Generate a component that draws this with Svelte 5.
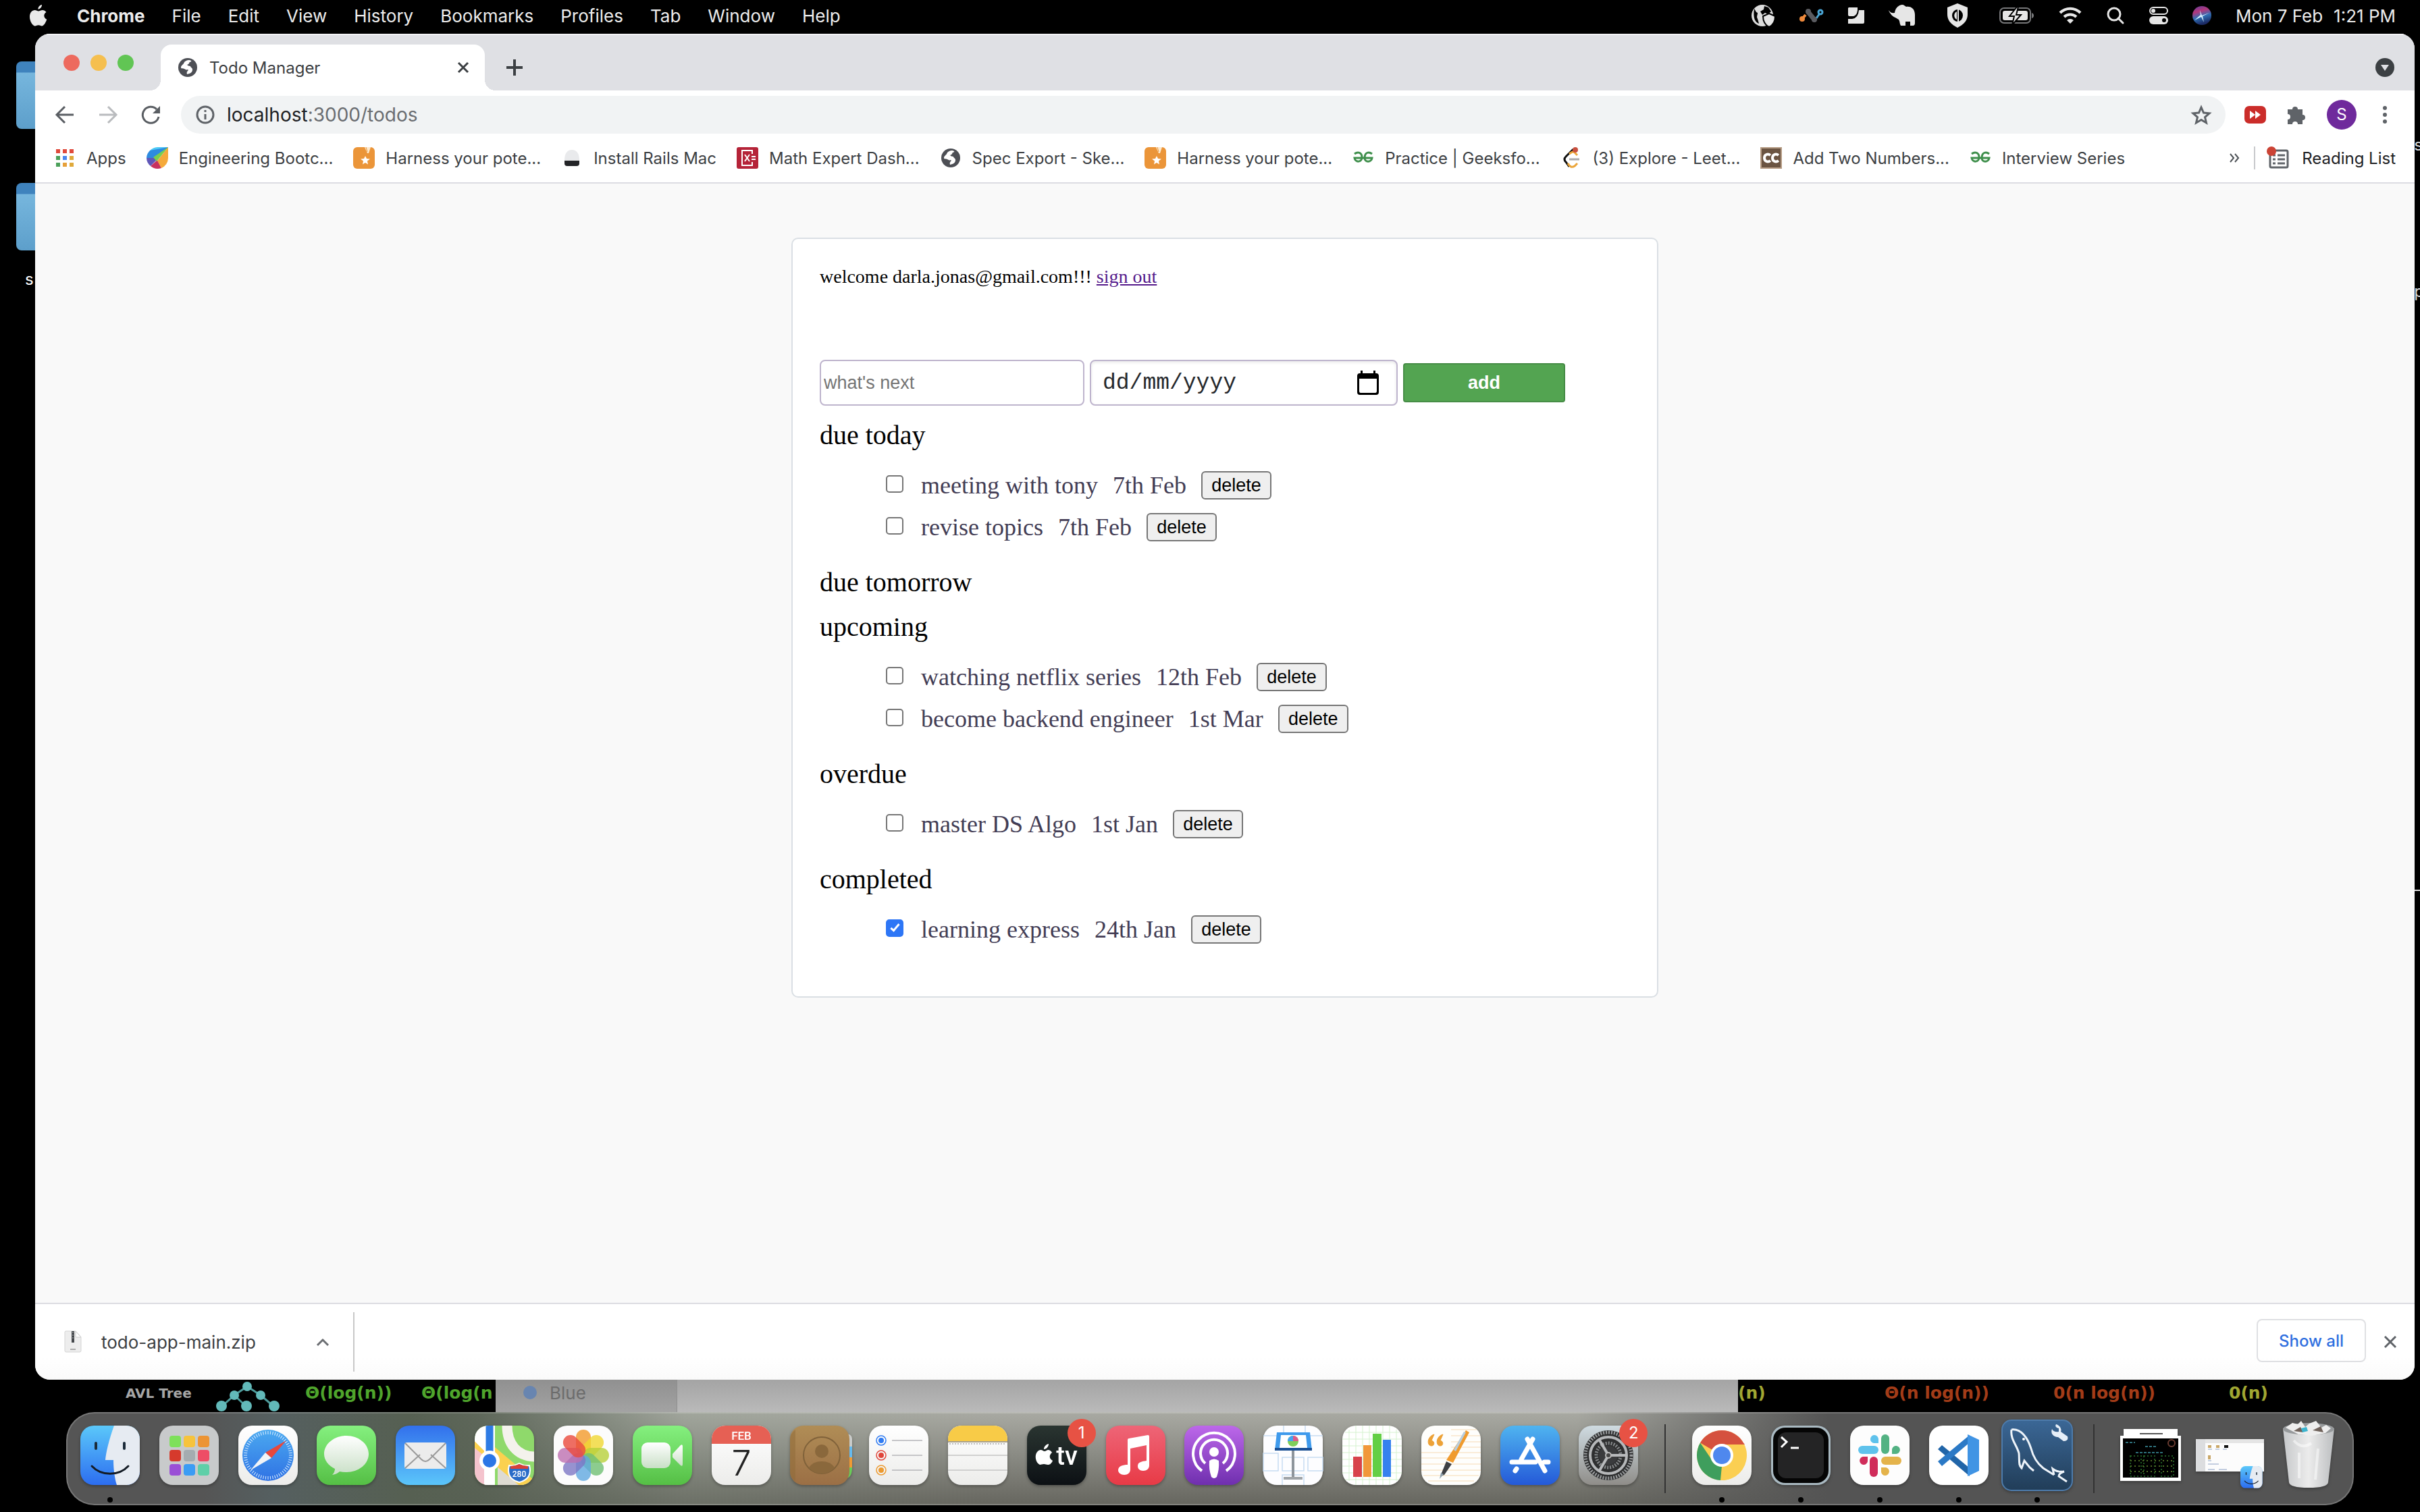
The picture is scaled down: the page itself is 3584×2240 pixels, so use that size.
<script>
  const menus = ['File', 'Edit', 'View', 'History', 'Bookmarks', 'Profiles', 'Tab', 'Window', 'Help'];

  const bookmarks = [
    { icon: 'apps', label: 'Apps' },
    { icon: 'wheel', label: 'Engineering Bootc...' },
    { icon: 'medal', label: 'Harness your pote...' },
    { icon: 'helmet', label: 'Install Rails Mac' },
    { icon: 'math', label: 'Math Expert Dash...' },
    { icon: 'globe', label: 'Spec Export - Ske...' },
    { icon: 'medal', label: 'Harness your pote...' },
    { icon: 'geeks', label: 'Practice | Geeksfo...' },
    { icon: 'leet', label: '(3) Explore - Leet...' },
    { icon: 'cc', label: 'Add Two Numbers...' },
    { icon: 'geeks', label: 'Interview Series' }
  ];

  let sections = $state([
    {
      title: 'due today',
      todos: [
        { id: 1, text: 'meeting with tony', date: '7th Feb', done: false },
        { id: 2, text: 'revise topics', date: '7th Feb', done: false }
      ]
    },
    { title: 'due tomorrow', todos: [] },
    {
      title: 'upcoming',
      todos: [
        { id: 3, text: 'watching netflix series', date: '12th Feb', done: false },
        { id: 4, text: 'become backend engineer', date: '1st Mar', done: false }
      ]
    },
    { title: 'overdue', todos: [{ id: 5, text: 'master DS Algo', date: '1st Jan', done: false }] },
    { title: 'completed', todos: [{ id: 6, text: 'learning express', date: '24th Jan', done: true }] }
  ]);

  const petals = ['#f39a2b', '#f0d732', '#b6cf3a', '#6fbf73', '#5fa8e0', '#7d77c4', '#bd6fb0', '#ea4a3c'];
  const ticks = Array.from({ length: 60 }, (_, i) => i * 6);
  const pads = ['#7ee05a', '#f6c33c', '#ec9434', '#d63a2c', '#a4acb0', '#ee4d66', '#9a4fd6', '#3b9cf4', '#5fcfa8'];
</script>

{#snippet globe()}
  <svg viewBox="0 0 28 28" aria-hidden="true">
    <circle cx="14" cy="14" r="14" fill="#4d4f55" />
    <path d="M17 3c-5 0-8 2-9 5-1 2-4 3-4 6 0 2 3 1 5 2s3 2 5 1l1 1c-2 2-3 3-2 6 5-1 8-3 8-7 0-3-3-3-3-5-2 0-4-1-5-2l2-1c2-1 1-3 2-3 3-1 3-2 0-3z" fill="#fff" />
  </svg>
{/snippet}

{#snippet face()}
  <rect width="88" height="88" rx="20" fill="url(#finderBlue)" />
  <path d="M50 0C42 22 38 40 37 51h12c0 14 2 28 5 37h14a20 20 0 0 0 20-20V20A20 20 0 0 0 68 0z" fill="#e6ebf2" />
  <path d="M23 26v8M65 26v8" stroke="#1b2b3a" stroke-width="4" stroke-linecap="round" />
  <path d="M17 60c14 15 40 15 54 0" fill="none" stroke="#141c26" stroke-width="3" stroke-linecap="round" />
{/snippet}

{#snippet chrome()}
  <circle cx="44" cy="44" r="37" fill="#fbcf52" />
  <path d="M44 44 12 25.500A37 37 0 0 1 76 25.500L78 28H44z" fill="#d5513e" />
  <path d="M12 25.500 30 52 44 60 42 81A37 37 0 0 1 12 25.500z" fill="#3f9e5d" />
  <path d="M58 52 42 81A37 37 0 0 0 77 28H44z" fill="#fbcf52" />
  <circle cx="44" cy="44" r="17" fill="#fff" />
  <circle cx="44" cy="44" r="13" fill="#4f88ee" />
{/snippet}

{#snippet favicon(name)}
  {#if name === 'globe'}
    {@render globe()}
  {:else}
    <svg viewBox="0 0 32 32" aria-hidden="true">
      {#if name === 'apps'}
        <path d="M3 3h6v6H3zM13 3h6v6h-6zM23 3h6v6h-6z" fill="#e04a3c" />
        <path d="M3 13h6v6H3zM3 23h6v6H3z" fill="#4ba05a" />
        <path d="M13 13h6v6h-6z" fill="#4a87ee" />
        <path d="M13 23h6v6h-6z" fill="#e6a03a" />
        <path d="M23 13h6v6h-6zM23 23h6v6h-6z" fill="#dfa93a" />
      {:else if name === 'wheel'}
        <path d="M32 0H16A16 16 0 0 0 5 5l10 15z" fill="#4cc9f5" />
        <path d="M32 0 5 5A16 16 0 0 0 0 16l14 4z" fill="#2e8be0" />
        <path d="M0 16a16 16 0 0 0 6 12l12-12z" fill="#6057b8" />
        <path d="M6 28a16 16 0 0 0 16 3l-6-12z" fill="#c8325f" />
        <path d="M32 0v16a16 16 0 0 1-10 15l-6-11z" fill="#f5a93a" />
        <path d="M32 0 15 21l-5-6z" fill="#79cf4f" />
      {:else if name === 'medal'}
        <rect width="32" height="32" rx="6" fill="#eb9539" />
        <path d="M17 0h9l-3 9h-2z" fill="#fde9cd" />
        <path d="m19 0 2 7" stroke="#eb9539" />
        <path d="m18 13 2 4 5 .5-4 3 1 5-4-2.500-4 2.500 1-5-4-3 5-.5z" fill="#fff" />
      {:else if name === 'helmet'}
        <path d="M5 20C5 9 9 4 16 4s11 5 11 16z" fill="#e9eaec" />
        <path d="M5 20h22v4a4 4 0 0 1-4 4H9a4 4 0 0 1-4-4z" fill="#232427" />
      {:else if name === 'math'}
        <rect width="32" height="32" rx="3" fill="#b52338" />
        <path d="M23 10V5H8v22h15v-5" fill="none" stroke="#fff" stroke-width="2" />
        <path d="m12 11 7 10m0-10-7 10M22 14h6m-6 4h6" stroke="#fff" stroke-width="2" />
      {:else if name === 'geeks'}
        <path d="M3 10c5-4 11-2 11 5 0 8-10 8-11 1h26c-1 7-11 7-11 0 0-8 6-10 11-6" fill="none" stroke="#3f8f4c" stroke-width="3" />
      {:else if name === 'leet'}
        <path d="M19 3 8 14q-4 4 0 8l5 7" fill="none" stroke="#111" stroke-width="3" />
        <path d="m13 10 3-2q3-2 5 0l4 4M11 24q4 8 10 4l4-4" fill="none" stroke="#eba53a" stroke-width="3" />
        <path d="M13 18h15" stroke="#aaa" stroke-width="3" />
        <circle cx="22" cy="4" r="4" fill="#c8503f" />
      {:else if name === 'cc'}
        <rect width="32" height="32" fill="#b59b84" />
        <rect x="2" y="2" width="28" height="28" fill="#6b5442" />
        <path d="M15 12c-4-3-9-1-9 4s5 7 9 4M27 12c-4-3-9-1-9 4s5 7 9 4" fill="none" stroke="#fff" stroke-width="4" />
      {/if}
    </svg>
  {/if}
{/snippet}

<svg class="defs" aria-hidden="true">
  <defs>
    <linearGradient id="finderBlue" x2="0" y2="1"><stop stop-color="#5bc8fa" /><stop offset="1" stop-color="#2c6df0" /></linearGradient>
    <linearGradient id="green" x2="0" y2="1"><stop stop-color="#85f07f" /><stop offset="1" stop-color="#55bf45" /></linearGradient>
    <linearGradient id="mailBlue" x2="0" y2="1"><stop stop-color="#3270ec" /><stop offset="1" stop-color="#5bc6fa" /></linearGradient>
    <linearGradient id="storeBlue" x2="0" y2="1"><stop stop-color="#4fb4f0" /><stop offset="1" stop-color="#2459d8" /></linearGradient>
    <linearGradient id="compass" x2="0" y2="1"><stop stop-color="#4ba9f0" /><stop offset="1" stop-color="#2f72e4" /></linearGradient>
    <linearGradient id="silver" x2="0" y2="1"><stop stop-color="#fff" /><stop offset="1" stop-color="#c9dfc6" /></linearGradient>
    <linearGradient id="paper" x2="0" y2="1"><stop stop-color="#fff" /><stop offset="1" stop-color="#ececea" /></linearGradient>
    <linearGradient id="brown" x2="0" y2="1"><stop stop-color="#b08d56" /><stop offset="1" stop-color="#9b6f45" /></linearGradient>
    <linearGradient id="musicRed" x2="0" y2="1"><stop stop-color="#ee6577" /><stop offset="1" stop-color="#e83a46" /></linearGradient>
    <linearGradient id="purple" x2="0" y2="1"><stop stop-color="#bd68ea" /><stop offset="1" stop-color="#6f2fae" /></linearGradient>
    <linearGradient id="tvDark" x2="0" y2="1"><stop stop-color="#2a3531" /><stop offset="1" stop-color="#0c1014" /></linearGradient>
    <linearGradient id="steel" x2="0" y2="1"><stop stop-color="#cfdbe1" /><stop offset="1" stop-color="#8f8d89" /></linearGradient>
    <linearGradient id="navy" x2="0" y2="1"><stop stop-color="#3b6796" /><stop offset="1" stop-color="#213d58" /></linearGradient>
    <linearGradient id="folder" x2="0" y2="1"><stop stop-color="#3f83bd" /><stop offset="0.160" stop-color="#3f83bd" /><stop offset="0.170" stop-color="#76b6dd" /><stop offset="1" stop-color="#5d9fcb" /></linearGradient>
    <linearGradient id="bin" x2="1"><stop stop-color="#c6c8ca" /><stop offset="0.500" stop-color="#ececec" /><stop offset="1" stop-color="#bcbec0" /></linearGradient>
    <linearGradient id="siri" x2="0.300" y2="1"><stop stop-color="#5a3f9c" /><stop offset="0.350" stop-color="#b4377c" /><stop offset="0.650" stop-color="#2f6fb4" /><stop offset="1" stop-color="#1c2b66" /></linearGradient>
    <clipPath id="tile"><rect width="88" height="88" rx="20" /></clipPath>
  </defs>
</svg>

<div class="desktop">
  <div class="folders" aria-hidden="true">
    <svg viewBox="0 0 110 100"><rect width="110" height="100" rx="8" fill="url(#folder)" /></svg>
    <svg viewBox="0 0 110 100"><rect width="110" height="100" rx="8" fill="url(#folder)" /></svg>
    <span>s</span>
  </div>
  <div class="edge" aria-hidden="true"><span>s</span><span>p</span><i></i></div>

  <header class="menubar">
    <svg class="apple" viewBox="0 0 26 32" aria-label="Apple"><path d="M18 0c.3 3-2.500 6.500-5.500 6.700C12.200 3.500 15 .5 18 0zM24.500 11c-5 3.200-3.500 9 .8 10.700C23.500 27 20.500 31.500 18 31.500c-2 0-2.600-1.200-5-1.200s-3.200 1.200-5 1.200C4.500 31.500 0 24.500 0 18 0 11.500 3.700 8 7.500 8c2.200 0 4 1.500 5.500 1.500S16.500 8 19 8c2 0 4.200 1 5.500 3z" fill="#e9e9e9" /></svg>
    <nav>
      <button class="strong">Chrome</button>
      {#each menus as menu}<button>{menu}</button>{/each}
    </nav>
    <div class="status">
      <svg width="36" height="34" viewBox="0 0 36 34" aria-hidden="true">
        <circle cx="17" cy="17" r="16" fill="#dcdcdc" />
        <path d="M5 7c2 2 2 5 5 6 0 4-2 5 0 9l2 7C6 27 3 20 5 7zM20 3l6 2 4 6-5 4-4-2-4 3-3-5 5-3z" fill="#000" />
        <path d="m27 14 9 4c0 8-3 13-9 16-6-3-9-8-9-16z" fill="#e6e6e6" stroke="#000" stroke-width="2" />
      </svg>
      <svg width="36" height="20" viewBox="0 0 36 20" aria-hidden="true">
        <path d="M13 5 22 16" stroke="#5a5b60" stroke-width="7" stroke-linecap="round" />
        <path d="m4 15 5-6" stroke="#ef8a3c" stroke-width="4" /><circle cx="4" cy="15" r="4" fill="#ef8a3c" />
        <path d="m25 14 5-7" stroke="#4aa6d6" stroke-width="3" /><circle cx="31" cy="5" r="3" fill="none" stroke="#4aa6d6" stroke-width="3" />
        <circle cx="13" cy="4" r="4" fill="#5a5b60" /><circle cx="22" cy="16" r="4" fill="#5a5b60" />
      </svg>
      <svg width="24" height="24" viewBox="0 0 24 24" aria-hidden="true"><path d="M1 0h13v4q-1 8-6 9H2q-2 0-2-2V1zM24 4v18q0 2-2 2H0v-7h6q9-1 10-13z" fill="#e6e6e6" /></svg>
      <svg width="40" height="32" viewBox="0 0 40 32" aria-hidden="true"><path d="M0 8c3 4 5 5 9 4C10 6 13 1 20 0c3 0 4 2 6 3 8-1 13 4 13 12v12q0 4-3 4h-4v-6h-7v6h-7c-2-3-1-6-3-9l-5-3C7 18 2 14 0 8z" fill="#e6e6e6" /></svg>
      <svg width="52" height="36" viewBox="0 0 52 36" aria-hidden="true"><path d="m26 0 15 6v10c0 9-5 15-15 20-10-5-15-11-15-20V6z" fill="#e6e6e6" /><ellipse cx="26" cy="18" rx="8" ry="9" fill="#000" /><path d="M25 12v12c-5-2-5-10 0-12z" fill="#e6e6e6" /><path d="M27 8v20" stroke="#e6e6e6" stroke-width="2" /></svg>
      <svg width="52" height="26" viewBox="0 0 52 26" aria-hidden="true"><rect x="1" y="2" width="45" height="22" rx="6" fill="none" stroke="#77787a" stroke-width="2" /><rect x="5" y="6" width="37" height="14" rx="3" fill="#e6e6e6" /><path d="M48 9q3 1 3 4t-3 4z" fill="#77787a" /><path d="M27-1 15 14h7l-3 13 13-15h-7l3-12z" fill="#e6e6e6" stroke="#000" stroke-width="2" /></svg>
      <svg width="34" height="26" viewBox="0 0 34 26" aria-hidden="true"><path d="M2 9a21 21 0 0 1 30 0M8 15a13 13 0 0 1 18 0" fill="none" stroke="#e6e6e6" stroke-width="4" /><path d="M12 20a7 7 0 0 1 10 0l-5 5z" fill="#e6e6e6" /></svg>
      <svg width="28" height="26" viewBox="0 0 28 26" aria-hidden="true"><circle cx="12" cy="11" r="9" fill="none" stroke="#e6e6e6" stroke-width="3" /><path d="m18 17 7 7" stroke="#e6e6e6" stroke-width="3" stroke-linecap="round" /></svg>
      <svg width="28" height="26" viewBox="0 0 28 26" aria-hidden="true"><rect x="1" y="1" width="26" height="10" rx="5" fill="none" stroke="#e6e6e6" stroke-width="2" /><circle cx="6" cy="6" r="3" fill="#e6e6e6" /><rect y="14" width="28" height="12" rx="6" fill="#e6e6e6" /><circle cx="22" cy="20" r="3" fill="#000" /></svg>
      <svg width="28" height="28" viewBox="0 0 28 28" aria-hidden="true"><circle cx="14" cy="14" r="14" fill="url(#siri)" /><path d="m11 6 3 8 11-4-10 5 2 9-4-8-10 5 9-8z" fill="#d8f0ff" /></svg>
      <time><span>Mon 7 Feb</span><span>1:21 PM</span></time>
    </div>
  </header>

  <main class="window">
    <div class="tabstrip">
      <div class="lights"><button class="red" aria-label="Close"></button><button class="amber" aria-label="Minimise"></button><button class="lime" aria-label="Zoom"></button></div>
      <div class="tab">
        <span class="tabicon">{@render globe()}</span>
        <span class="title">Todo Manager</span>
        <button aria-label="Close tab"><svg width="18" height="18" viewBox="0 0 18 18"><path d="m2 2 14 14M16 2 2 16" stroke="#3c4043" stroke-width="3" /></svg></button>
      </div>
      <button class="newtab" aria-label="New tab"><svg width="24" height="24" viewBox="0 0 24 24"><path d="M12 0v24M0 12h24" stroke="#3c4043" stroke-width="4" /></svg></button>
      <button class="tabsearch" aria-label="Search tabs"><svg width="28" height="28" viewBox="0 0 28 28"><circle cx="14" cy="14" r="14" fill="#3c4043" /><path d="M8 10h12l-6 9z" fill="#dfe0e4" /></svg></button>
    </div>

    <div class="toolbar">
      <div class="history">
        <button aria-label="Back"><svg width="28" height="28" viewBox="0 0 28 28"><path d="M27 14H3M14 2 2 14l12 12" fill="none" stroke="#5a5e63" stroke-width="3" /></svg></button>
        <button aria-label="Forward"><svg width="28" height="28" viewBox="0 0 28 28"><path d="M1 14h24M14 2l12 12-12 12" fill="none" stroke="#b9bbbe" stroke-width="3" /></svg></button>
        <button aria-label="Reload"><svg width="28" height="28" viewBox="0 0 28 28"><path d="M25 17A12 12 0 1 1 22 6" fill="none" stroke="#5a5e63" stroke-width="3" /><path d="M27 1v11H16z" fill="#5a5e63" /></svg></button>
      </div>
      <div class="address">
        <svg width="28" height="28" viewBox="0 0 28 28" aria-hidden="true"><circle cx="14" cy="14" r="12" fill="none" stroke="#5f6368" stroke-width="3" /><path d="M14 7v3M14 13v8" stroke="#5f6368" stroke-width="3" /></svg>
        <p>localhost<span>:3000/todos</span></p>
        <button aria-label="Bookmark this page"><svg width="30" height="28" viewBox="0 0 30 28"><path d="m15 3 3.500 8 8.500.8-6.500 5.700 2 8.500-7.500-4.500L7.500 26l2-8.500L3 11.800l8.500-.8z" fill="none" stroke="#5f6368" stroke-width="3" /></svg></button>
      </div>
      <div class="tools">
        <svg width="32" height="26" viewBox="0 0 32 26" aria-hidden="true"><rect width="32" height="26" rx="7" fill="#cb2d2a" /><path d="m8 7 8 6-8 6zM16 7l8 6-8 6z" fill="#fff" /></svg>
        <svg width="30" height="30" viewBox="0 0 30 30" aria-hidden="true"><path d="M2 7h7a4 4 0 1 1 8 0h7v8a4 4 0 1 1 0 8v6h-7a4 4 0 0 0-8 0H2v-7a4 4 0 0 0 0-8z" fill="#5f6368" /></svg>
        <span class="avatar">S</span>
        <button aria-label="Menu"><svg width="8" height="28" viewBox="0 0 8 28"><circle cx="4" cy="4" r="3" fill="#5f6368" /><circle cx="4" cy="14" r="3" fill="#5f6368" /><circle cx="4" cy="24" r="3" fill="#5f6368" /></svg></button>
      </div>
    </div>

    <nav class="bookmarks">
      {#each bookmarks as mark}
        <a href="#{mark.icon}"><span class="favicon {mark.icon}">{@render favicon(mark.icon)}</span>{mark.label}</a>
      {/each}
      <button class="more" aria-label="More bookmarks"><svg width="14" height="14" viewBox="0 0 14 14"><path d="m1 1 5 6-5 6M8 1l5 6-5 6" fill="none" stroke="#4d5156" stroke-width="2" /></svg></button>
      <a class="reading" href="#reading"><svg width="34" height="34" viewBox="0 0 34 34" aria-hidden="true"><rect x="5" y="6" width="26" height="25" rx="2" fill="none" stroke="#5f6368" stroke-width="3" /><path d="M9 13h4m3 0h11M9 19h4m3 0h11M9 25h4m3 0h11" stroke="#5f6368" stroke-width="3" /><circle cx="7" cy="7" r="7" fill="#cb4335" /></svg>Reading List</a>
    </nav>

    <div class="page">
      <section class="card">
        <p class="welcome">welcome darla.jonas@gmail.com!!! <a href="#signout">sign out</a></p>
        <form onsubmit={(event) => event.preventDefault()}>
          <input class="next" type="text" placeholder="what's next" aria-label="what's next" />
          <div class="date">
            <input type="text" placeholder="dd/mm/yyyy" aria-label="Due date" />
            <button type="button" aria-label="Open calendar"><svg width="32" height="36" viewBox="0 0 32 36"><path d="M5 0h3v4h16V0h3v4h1q4 0 4 4v24q0 4-4 4H4q-4 0-4-4V8q0-4 4-4h1zM3 12v18q0 3 2 3h22q2 0 2-3V12z" fill="#000" /></svg></button>
          </div>
          <button class="add">add</button>
        </form>
        {#each sections as section}
          <h2>{section.title}</h2>
          {#if section.todos.length}
            <ul>
              {#each section.todos as todo (todo.id)}
                <li>
                  <input type="checkbox" id="todo-{todo.id}" bind:checked={todo.done} />
                  <label for="todo-{todo.id}">{todo.text}</label>
                  <span>{todo.date}</span>
                  <button onclick={() => (section.todos = section.todos.filter((t) => t.id !== todo.id))}>delete</button>
                </li>
              {/each}
            </ul>
          {/if}
        {/each}
      </section>
    </div>

    <footer class="downloads">
      <div class="file">
        <svg width="26" height="32" viewBox="0 0 26 32" aria-hidden="true"><path d="M2 0h15l8 9v20q0 2-2 2H3q-2 0-2-2V1z" fill="#ededed" stroke="#d5d5d5" /><path d="M17 0v9h8z" fill="#fff" stroke="#ccc" /><path d="M13 0v17" stroke="#45484c" stroke-width="4" /><path d="M13 1v12" stroke="#b9bbbd" stroke-width="1" stroke-dasharray="2 2" /><path d="M9 27h8" stroke="#aaa" stroke-width="2" /></svg>
        <span>todo-app-main.zip</span>
        <button aria-label="Download options"><svg width="20" height="12" viewBox="0 0 20 12"><path d="m2 11 8-8 8 8" fill="none" stroke="#6b6e72" stroke-width="3" /></svg></button>
      </div>
      <button class="showall">Show all</button>
      <button aria-label="Close downloads"><svg width="20" height="20" viewBox="0 0 20 20"><path d="m2 2 16 16M18 2 2 18" stroke="#5f6368" stroke-width="3" /></svg></button>
    </footer>
  </main>

  <div class="behind">
    <div class="left">
      <span class="tree">AVL Tree</span>
      <svg width="98" height="44" viewBox="0 0 98 44" aria-hidden="true"><path d="M10 38 29 21 48 8l20 13 20 17M29 21l18 17" fill="none" stroke="#4c9a9a" stroke-width="3" /><g fill="#62b9b9"><circle cx="48" cy="8" r="7" /><circle cx="29" cy="21" r="7" /><circle cx="68" cy="21" r="7" /><circle cx="10" cy="37" r="8" /><circle cx="47" cy="37" r="8" /><circle cx="88" cy="37" r="8" /></g></svg>
      <span>Θ(log(n))</span><span>Θ(log(n</span>
    </div>
    <div class="tag"><i></i>Blue</div>
    <div class="panel"></div>
    <div class="right"><span>(n)</span><span class="hot">Θ(n log(n))</span><span class="hot">0(n log(n))</span><span>0(n)</span></div>
  </div>

  <nav class="dock" aria-label="Dock">
    <button class="app running" aria-label="Finder"><svg viewBox="0 0 88 88">{@render face()}</svg></button>
    <button class="app" aria-label="Launchpad"><svg viewBox="0 0 88 88"><rect width="88" height="88" rx="20" fill="#c8cacb" />{#each pads as pad, i}<rect x={15 + (i % 3) * 21} y={15 + Math.floor(i / 3) * 21} width="17" height="17" rx="4" fill={pad} />{/each}</svg></button>
    <button class="app" aria-label="Safari"><svg viewBox="0 0 88 88"><rect width="88" height="88" rx="20" fill="url(#paper)" /><circle cx="44" cy="44" r="38" fill="url(#compass)" />{#each ticks as angle}<path d="M44 8v5" stroke="#dbeeff" stroke-width="1" transform="rotate({angle} 44 44)" />{/each}<path d="M71 22 49 48l-9-8z" fill="#e8483c" /><path d="m18 66 22-26 9 8z" fill="#f1f4f7" /></svg></button>
    <button class="app" aria-label="Messages"><svg viewBox="0 0 88 88"><rect width="88" height="88" rx="20" fill="url(#green)" /><path d="M44 15c18 0 33 12 33 27S62 69 44 69q-6 0-10-1-4 4-11 5 4-4 4-9C17 59 11 51 11 42c0-15 15-27 33-27z" fill="url(#silver)" /></svg></button>
    <button class="app" aria-label="Mail"><svg viewBox="0 0 88 88"><rect width="88" height="88" rx="20" fill="url(#mailBlue)" /><rect x="13" y="25" width="62" height="39" rx="4" fill="#ececec" /><path d="m14 63 22-20M74 63 52 43M14 26l24 24q6 6 12 0l24-24" fill="none" stroke="#9a9a9a" stroke-width="2" /></svg></button>
    <button class="app" aria-label="Maps"><svg viewBox="0 0 88 88"><g clip-path="url(#tile)"><rect width="88" height="88" fill="#8fd96b" /><path d="M0 30v58h30V40z" fill="#f4c3cd" /><path d="M34 62v26h54L50 50z" fill="#dedbd2" /><path d="m0 20 88 74" stroke="#fbd14f" stroke-width="20" /><path d="M48 0c0 26 14 46 42 46" fill="none" stroke="#f4f2ec" stroke-width="15" /><path d="M0 0h12v24L0 12zM22 0v88" fill="#f4f2ec" stroke="#fff" stroke-width="16" /><path d="M22 0v50" stroke="#2e7be4" stroke-width="11" /><circle cx="22" cy="52" r="15" fill="#fff" /><circle cx="22" cy="52" r="10" fill="#2b76e6" /></g><path d="M51 59q8 1 15-3 7 4 15 3 5 20-15 25-20-5-15-25z" fill="#2a6cc8" stroke="#fff" stroke-width="2" /><path d="M53 60q7 0 13-3 6 3 13 3v4H53z" fill="#d84038" /><text x="66" y="76" font-size="12">280</text></svg></button>
    <button class="app" aria-label="Photos"><svg viewBox="0 0 88 88"><rect width="88" height="88" rx="20" fill="#fcfcfc" />{#each petals as petal, i}<rect x="33" y="6" width="22" height="38" rx="11" fill={petal} opacity="0.800" transform="rotate({i * 45} 44 44)" />{/each}</svg></button>
    <button class="app" aria-label="FaceTime"><svg viewBox="0 0 88 88"><rect width="88" height="88" rx="20" fill="url(#green)" /><rect x="13" y="25" width="43" height="38" rx="9" fill="url(#silver)" /><path d="m59 42 12-13q3-2 3 2v26q0 4-3 2L59 47z" fill="url(#silver)" /></svg></button>
    <button class="app" aria-label="Calendar"><svg viewBox="0 0 88 88"><rect width="88" height="88" rx="20" fill="url(#paper)" /><path d="M0 27v-7A20 20 0 0 1 20 0h48a20 20 0 0 1 20 20v7z" fill="#e66054" /><text x="44" y="21" font-size="17">FEB</text><text class="day" x="44" y="74" font-size="52">7</text></svg></button>
    <button class="app" aria-label="Contacts"><svg viewBox="0 0 88 88"><path d="M84 12q8 1 8 8v11h-8z" fill="#c9cbc9" /><path d="M84 31h8v16h-8z" fill="#65b9ee" /><path d="M84 47h8v16h-8z" fill="#f09a34" /><path d="M84 62h8q0 14-8 16z" fill="#69cc58" /><rect width="88" height="88" rx="20" fill="url(#brown)" /><path d="M8 6q-8 6-8 14v48q0 8 8 15z" fill="#8d6a38" opacity="0.500" /><circle cx="47" cy="44" r="27" fill="none" stroke="#80623a" stroke-width="2" /><circle cx="47" cy="38" r="10" fill="#8a683c" /><path d="M28 62q6-9 19-9t19 9q-7 9-19 9t-19-9z" fill="#8a683c" /></svg></button>
    <button class="app" aria-label="Reminders"><svg viewBox="0 0 88 88"><rect width="88" height="88" rx="20" fill="url(#paper)" />{#each ['#2f7bf2', '#e0453a', '#ec9a30'] as dot, i}<circle cx="18" cy={22 + i * 22} r="4" fill={dot} /><circle cx="18" cy={22 + i * 22} r="7" fill="none" stroke={dot} stroke-width="1.500" /><path d="M34 {22 + i * 22}h45" stroke="#b4b5b8" stroke-width="1.500" />{/each}</svg></button>
    <button class="app" aria-label="Notes"><svg viewBox="0 0 88 88"><rect width="88" height="88" rx="20" fill="url(#paper)" /><path d="M0 23v-3A20 20 0 0 1 20 0h48a20 20 0 0 1 20 20v3z" fill="#f8cb47" /><path d="M0 24h88" stroke="#a9a18d" stroke-width="2" /><path d="M2 27h84" stroke="#bbb" stroke-width="2" stroke-dasharray="2 2" /><path d="M0 44h88M0 66h88" stroke="#d0d0d0" stroke-width="2" /></svg></button>
    <button class="app" aria-label="TV"><svg viewBox="0 0 88 88"><rect width="88" height="88" rx="20" fill="url(#tvDark)" /><path d="M32 27c0 4-3 8-7 8 0-4 3-7 7-8zM37 40c-5 4-4 9 1 12-2 5-5 6-7 6-3 0-3-1-6-1s-4 1-6 1c-8-4-9-20 1-22 3 0 4 2 6 2s3-2 6-2c3 1 4 2 5 4z" fill="#fff" /><text x="59" y="58" font-size="38">tv</text></svg><span class="badge">1</span></button>
    <button class="app" aria-label="Music"><svg viewBox="0 0 88 88"><rect width="88" height="88" rx="20" fill="url(#musicRed)" /><path d="M32 21q0-2 2-2l28-5q2 0 2 2v43c0 5-4 8-9 8s-8-3-8-7c0-6 6-7 13-8V29l-24 5v31c0 5-4 8-9 8s-9-3-9-7c0-6 7-8 14-8z" fill="#fff" /></svg></button>
    <button class="app" aria-label="Podcasts"><svg viewBox="0 0 88 88"><rect width="88" height="88" rx="20" fill="url(#purple)" /><path d="M26 67a31 31 0 1 1 36 0M31 56a20 20 0 1 1 26 0" fill="none" stroke="#fff" stroke-width="4" /><circle cx="44" cy="39" r="7" fill="#fff" /><path d="M37 52q7-5 14 0 1 13-3 24-4 4-8 0-4-11-3-24z" fill="#fff" /></svg></button>
    <button class="app" aria-label="Keynote"><svg viewBox="0 0 88 88"><rect width="88" height="88" rx="20" fill="#fdfdff" /><g fill="none" stroke="#c6dcf2" stroke-width="1.500"><path d="M0 15h88M30 0v22M62 0v22M0 41h22v26H0zM28 47h32v20H28zM66 47h22v20H66zM28 88V73h32v15" /></g><path d="M44 36v41" stroke="#8e959c" stroke-width="4" /><path d="M20 10h49l3 27H17z" fill="#3f9aec" /><path d="M26 14h37l2 19H24z" fill="#fff" /><path d="M17 33h55v4H17z" fill="#1a4f94" /><circle cx="44" cy="23" r="8" fill="#7fce5b" /><path d="M44 23v-8a8 8 0 0 1 8 8z" fill="#e05a88" /><path d="M44 23v-8a8 8 0 0 0-8 8z" fill="#46a5f0" /><path d="M30 76h28v4H30z" fill="#9fa4a8" /></svg></button>
    <button class="app" aria-label="Numbers"><svg viewBox="0 0 88 88"><rect width="88" height="88" rx="20" fill="#fff" /><path d="M10 6v76M20 0v88M30 0v88M40 0v88M50 0v88M60 0v88M70 0v88M80 6v76M4 10h80M0 20h88M0 30h88M0 40h88M0 50h88M0 60h88M0 70h88M4 80h80" stroke="#d5f2cf" stroke-width="1" /><path d="M16 46h13v30H16z" fill="#d8434c" /><path d="M31 29h12v47H31z" fill="#f1983a" /><path d="M45 12h13v64H45z" fill="#63cf45" /><path d="M60 21h12v55H60z" fill="#3681ee" /></svg></button>
    <button class="app" aria-label="Pages"><svg viewBox="0 0 88 88"><rect width="88" height="88" rx="20" fill="#fefefc" /><path d="M44 6h38M44 15h43M44 24h44M44 32h44M0 40h88M0 48h88M0 57h88M0 66h88M3 74h82M10 82h68" stroke="#f9e6cc" stroke-width="1.500" /><path d="M19 13c-11 3-11 17-4 17 5 0 5-7 0-8zM32 13c-11 3-11 17-4 17 5 0 5-7 0-8z" fill="#eda237" stroke="#eda237" /><path d="m66 7 5 3-24 45-10-4z" fill="#f09b2e" /><path d="m63 9-15 27 3 2L66 10z" fill="#b8cddd" /><path d="m37 53 8 4-11 16-6 2z" fill="#3d3f42" /><path d="m27 79 2-9 4 2z" fill="#8ea0ac" /></svg></button>
    <button class="app" aria-label="App Store"><svg viewBox="0 0 88 88"><rect width="88" height="88" rx="20" fill="url(#storeBlue)" /><g stroke="#fff" stroke-width="7" stroke-linecap="round"><path d="M48 20 31 50M40 20l26 47M17 54h35M65 54h6M24 64l-2 3" /></g></svg></button>
    <button class="app" aria-label="System Preferences"><svg viewBox="0 0 88 88"><rect width="88" height="88" rx="20" fill="url(#steel)" /><circle cx="44" cy="44" r="37" fill="#2e2f30" /><circle cx="44" cy="44" r="34" fill="none" stroke="#9a9d9f" stroke-width="5" stroke-dasharray="2 2" /><circle cx="44" cy="44" r="27" fill="none" stroke="#b5b7b9" stroke-width="4" /><circle cx="44" cy="44" r="18" fill="none" stroke="#85888a" stroke-width="5" stroke-dasharray="2 2" /><circle cx="44" cy="44" r="14" fill="#3a3b3d" /><path d="M44 44h28M44 44 30 20M44 44 30 68" stroke="#b8babc" stroke-width="4" /><circle cx="44" cy="44" r="4" fill="#444" stroke="#bbb" stroke-width="2" /></svg><span class="badge">2</span></button>
    <i class="divider"></i>
    <button class="app running" aria-label="Google Chrome"><svg viewBox="0 0 88 88"><rect width="88" height="88" rx="20" fill="url(#paper)" />{@render chrome()}</svg></button>
    <button class="app running" aria-label="Terminal"><svg viewBox="0 0 88 88"><rect width="88" height="88" rx="20" fill="#a9b9c1" /><rect x="3" y="3" width="82" height="82" rx="18" fill="#050505" /><rect x="10" y="10" width="68" height="68" rx="12" fill="#242425" /><path d="m15 17 8 7-8 8M29 33h12" fill="none" stroke="#fff" stroke-width="3" /></svg></button>
    <button class="app running" aria-label="Slack"><svg viewBox="0 0 88 88"><rect width="88" height="88" rx="20" fill="#fdfdfd" /><g fill="#5fc2ec"><rect x="12" y="30" width="30" height="12" rx="6" /><path d="M42 26h-7a6 6 0 1 1 7-6z" /></g><g fill="#53b283"><rect x="46" y="13" width="12" height="29" rx="6" /><path d="M62 42v-7a6 6 0 1 1 6 7z" /></g><g fill="#e4b34b"><rect x="46" y="46" width="30" height="12" rx="6" /><path d="M46 62h7a6 6 0 1 1-7 7z" /></g><g fill="#d02c5a"><rect x="29" y="46" width="12" height="30" rx="6" /><path d="M26 46v7a6 6 0 1 1-7-7z" /></g></svg></button>
    <button class="app running" aria-label="Visual Studio Code"><svg viewBox="0 0 88 88"><rect width="88" height="88" rx="20" fill="#fff" /><path d="m13 35 6-6 41 34v12z" fill="#2165a8" /><path d="m13 53 6 7 41-35V14z" fill="#2b79c6" /><path d="m57 13 17 8v46l-17 8z" fill="#4094e4" /></svg></button>
    <button class="app wide running" aria-label="MySQL Workbench"><svg viewBox="0 0 104 104"><rect width="104" height="104" rx="14" fill="url(#navy)" stroke="#4d7bab" stroke-width="2" /><path d="M14 14c14-2 24 12 29 28 3 12 8 21 18 29l16 10M14 14c-2 14 8 23 11 35 1 10-1 18 4 22l4-11 8 10 6 5M77 81l-2-9c5 4 10 5 17 4-6 2-8 4-8 7l12 8" fill="none" stroke="#eef4fa" stroke-width="3" /><circle cx="32" cy="28" r="2" fill="#fff" /><path d="M80 6c-2 3 0 5 4 6v5c-4 1-8 0-10-4-3 8 4 12 9 12l8 6q8 0 6-7l-10-7c2-4-2-10-7-11z" fill="#e7eff8" /></svg></button>
    <i class="divider"></i>
    <button class="app" aria-label="Sorting algorithms window"><svg viewBox="0 0 88 88"><path d="M4 5h80v10h5v67H-1V15h5z" fill="#fff" /><path d="M28 12h34" stroke="#555" stroke-width="2" /><path d="M3 19h82v58H3z" fill="#000" /><path d="M14 45h16v30H14zM34 45h16v30H34zM60 45h18v30H60z" fill="none" stroke="#1f5a24" stroke-width="2" stroke-dasharray="2 3" /><path d="M14 52h64M14 60h64M14 68h64" stroke="#4c6a24" stroke-width="2" stroke-dasharray="2 4" /><path d="M7 25h14M36 31h16M22 40h40" stroke="#2d6f7a" stroke-width="2" stroke-dasharray="4 2" /><circle cx="75" cy="26" r="5" fill="none" stroke="#6a3b30" stroke-width="2" /></svg></button>
    <button class="app" aria-label="Finder window"><svg viewBox="0 0 88 88"><rect x="-6" y="20" width="101" height="48" fill="#fcfcfc" /><path d="M-6 20H8v48H-6z" fill="#dcdddf" /><path d="M8 23h87" stroke="#e5e5e5" stroke-width="6" /><path d="M12 29h5v4h-5zM24 29h5v4h-5zM12 44h4v6h-4z" fill="#c9a768" /><path d="M36 29h6v4h-6z" fill="#111" /><path d="M12 35h6m5 0h6m5 0h6M12 52h5M12 57h16M12 65h10m6 0h12" stroke="#8ba0c4" /><g transform="translate(60 60) scale(.37)">{@render face()}</g></svg></button>
    <button class="app" aria-label="Bin"><svg viewBox="0 0 88 88"><path d="M6 4h76L73 84q-1 8-29 8t-29-8z" fill="url(#bin)" /><ellipse cx="44" cy="5" rx="38" ry="9" fill="#96999b" /><path d="M10 3 20-4l8 2 5-5 6 9 6-5 10-4 8 10 7-4 7 5-8 7-20 4-20-2z" fill="#eee" /><path d="m22 8 10-6 4 8zM50 7l12-6 4 9z" fill="#6f625b" /><path d="m33 4 8-2 2 6-8 2z" fill="#3cb4cf" /><path d="M22 22q12 14 26 4M30 40v38M58 34l-4 46" fill="none" stroke="#fff" stroke-width="4" opacity="0.500" /></svg></button>
  </nav>
</div>

<style>
  :global(body) { margin: 0; background: #000; }
  button { border: 0; padding: 0; margin: 0; background: none; font: inherit; color: inherit; }
  svg { display: block; overflow: visible; flex: none; }
  a { color: inherit; text-decoration: none; }
  p, h2, ul { margin: 0; padding: 0; }
  .defs { position: absolute; width: 0; height: 0; }

  .desktop { position: relative; min-height: 100vh; box-sizing: border-box; padding-bottom: 10px; display: flex; flex-direction: column; overflow: hidden; background: #000; font-family: Inter, sans-serif; font-size: 24px; }
  .folders { position: absolute; top: 91px; left: 24px; display: flex; flex-direction: column; gap: 80px; color: #fff; }
  .folders svg { width: 110px; height: 100px; }
  .folders span { margin: -52px 0 0 13px; font-size: 24px; }
  .edge { position: absolute; top: 200px; right: -6px; display: flex; flex-direction: column; color: #ddd; gap: 188px; }
  .edge i { width: 14px; height: 2px; margin-top: 684px; background: #ddd; }

  .menubar { display: flex; align-items: center; height: 50px; padding: 0 36px 4px 44px; box-sizing: border-box; color: #ececec; font-size: 26px; }
  .apple { width: 26px; height: 32px; margin-right: 44px; }
  .menubar nav { display: flex; gap: 40px; margin-right: auto; }
  .strong { font-weight: 700; }
  .status { display: flex; align-items: center; gap: 36px; }
  time { display: flex; gap: 16px; white-space: nowrap; }

  .window { position: relative; flex: 1; display: flex; flex-direction: column; margin: 0 8px 0 52px; border-radius: 22px; overflow: hidden; background: #fff; color: #3c4043; }
  .tabstrip { display: flex; height: 84px; box-sizing: border-box; border-top: 2px solid #f4f4f6; background: #dfe0e4; padding: 14px 30px 0 42px; }
  .lights { display: flex; gap: 16px; margin: 15px 40px 0 0; width: 104px; }
  .lights button { width: 24px; height: 24px; border-radius: 50%; }
  .red { background: #ed6a5e; }
  .amber { background: #f5bf4f; }
  .lime { background: #61c554; }
  .tab { position: relative; display: flex; align-items: center; width: 480px; box-sizing: border-box; padding: 0 23px 0 26px; background: #fff; border-radius: 16px 16px 0 0; }
  .tab::before, .tab::after { content: ''; position: absolute; bottom: 0; width: 16px; height: 16px; }
  .tab::before { left: -16px; background: radial-gradient(circle at 0 0, transparent 16px, #fff 16px); }
  .tab::after { right: -16px; background: radial-gradient(circle at 100% 0, transparent 16px, #fff 16px); }
  .tabicon { width: 28px; }
  .title { flex: 1; margin-left: 18px; }
  .newtab { margin-left: 32px; }
  .tabsearch { margin-left: auto; }

  .toolbar { display: flex; align-items: center; height: 72px; padding: 0 40px 0 30px; }
  .history { display: flex; gap: 36px; margin-right: 30px; }
  .address { flex: 1; display: flex; align-items: center; height: 56px; border-radius: 28px; background: #f1f3f4; padding: 0 21px 0 22px; }
  .address p { flex: 1; margin-left: 18px; font-size: 28px; color: #202124; }
  .address p span { color: #6a6d71; }
  .tools { display: flex; align-items: center; gap: 30px; margin-left: 28px; }
  .avatar { width: 44px; height: 44px; margin-right: 8px; border-radius: 50%; background: #6f2a9c; color: #fff; text-align: center; line-height: 44px; }

  .bookmarks { display: flex; align-items: center; height: 66px; box-sizing: border-box; border-bottom: 2px solid #dcdce2; padding: 0 28px 8px; white-space: nowrap; }
  .bookmarks a { display: flex; align-items: center; margin-right: 30px; }
  .favicon { width: 32px; margin-right: 16px; }
  .favicon.globe { width: 28px; margin: 0 18px 0 2px; }
  .more { margin-left: auto; }
  .bookmarks .reading { margin: 0 0 0 22px; padding-left: 17px; border-left: 2px solid #c8c9cc; color: #202124; }
  .reading svg { margin-right: 18px; }

  .page { flex: 1; padding: 80px 0; background: #f9f9f9; font-family: 'Liberation Serif', serif; color: #000; }
  .card { width: 1284px; max-width: 100%; box-sizing: border-box; margin: 0 auto; padding: 40px; border: 2px solid #dadfe4; border-radius: 10px; background: #fff; }
  .welcome { font-size: 28px; line-height: 32px; }
  .welcome a { color: #551a8b; text-decoration: underline; }
  form { display: flex; align-items: center; gap: 8px; margin: 107px 0 21px; }
  .next, .date { height: 68px; box-sizing: border-box; border: 2px solid #beb4cd; border-radius: 8px; background: #fff; }
  .next { width: 392px; padding: 0 4px; font: 27px 'Liberation Sans', sans-serif; }
  .next::placeholder { color: #757575; }
  .date { display: flex; align-items: center; width: 456px; padding: 0 26px 0 17px; box-shadow: inset 0 2px 4px #e8e8e8; }
  .date input { flex: 1; min-width: 0; border: 0; padding: 0; background: none; font: 33px 'Liberation Mono', monospace; }
  .date input::placeholder { color: #25282c; opacity: 1; }
  .add { width: 240px; height: 58px; box-sizing: border-box; border: 2px solid #468c46; border-radius: 4px; background: #53a451; color: #fff; font: bold 27px 'Liberation Sans', sans-serif; }
  h2 { margin-bottom: 20px; font-size: 40px; line-height: 46px; font-weight: 400; }
  ul { margin-bottom: 28px; padding-left: 98px; list-style: none; }
  li { display: flex; align-items: center; height: 62px; font-size: 36px; color: #433d55; }
  li input { appearance: none; display: grid; place-items: center; width: 26px; height: 26px; box-sizing: border-box; margin: 0 26px 4px 0; border: 2px solid #767676; border-radius: 5px; background: #fff; }
  li input:checked { border-color: #2d76f6; background: #2d76f6; }
  li input:checked::after { content: ''; width: 7px; height: 14px; margin-bottom: 4px; box-sizing: border-box; border: solid #fff; border-width: 0 3px 3px 0; rotate: 40deg; }
  li label { margin-right: 22px; }
  li button { width: 104px; height: 42px; margin-left: 22px; border: 2px solid #767676; border-radius: 6px; background: #efefef; color: #000; font: 27px 'Liberation Sans', sans-serif; }

  .downloads { display: flex; align-items: center; height: 114px; box-sizing: border-box; border-top: 2px solid #dcdce2; padding: 0 26px 0 43px; background: linear-gradient(#fff 70%, #fafafa); }
  .file { display: flex; align-items: center; height: 88px; width: 428px; margin-right: auto; border-right: 2px solid #c8c8c8; }
  .file span { flex: 1; margin-left: 29px; font-size: 26px; }
  .file button { margin-right: 35px; }
  .showall { width: 162px; height: 64px; margin: 0 26px 4px 0; border: 2px solid #dfe0e3; border-radius: 8px; color: #2f6fe0; font-weight: 500; }

  .behind { display: flex; height: 48px; overflow: hidden; font: bold 25px 'DejaVu Sans', sans-serif; line-height: 40px; color: #4fa52c; white-space: nowrap; }
  .left { width: 734px; display: grid; grid-template-columns: 132px 134px 172px 110px; padding-left: 186px; box-sizing: border-box; overflow: hidden; }
  .left svg { margin-top: 2px; }
  .left .tree { color: #a6a6a6; font-size: 20px; }
  .tag { display: flex; align-items: center; width: 269px; box-sizing: border-box; padding: 0 0 10px 41px; gap: 19px; background: linear-gradient(#909090, #a3a3a3); border-right: 1px solid #8f8f8f; color: #6c6c6c; font: 26px Inter, sans-serif; }
  .tag i { width: 20px; height: 20px; border-radius: 50%; background: #6885b0; }
  .panel { flex: 1; background: linear-gradient(#a4a4a4, #bababa); }
  .right { display: grid; grid-template-columns: 217px 250px 260px 283px; width: 1010px; color: #a1a732; }
  .right .hot { color: #a33c18; }

  .dock { display: flex; justify-content: space-between; height: 138px; margin: 0 98px; box-sizing: border-box; padding: 18px 21px 0 19px; border: 2px solid rgba(255, 255, 255, 0.2); border-radius: 42px; background: linear-gradient(90deg, #555 6%, #555f60 9%, #566052 15%, rgba(86, 96, 82, 0.9) 18%, rgba(130, 150, 130, 0.2) 27%, rgba(120, 120, 110, 0) 40%, rgba(120, 120, 120, 0) 66%, #545454 77%), linear-gradient(#a9aaa3, #66665f); background-origin: border-box; }
  .app { position: relative; width: 88px; height: 88px; }
  .app svg { width: 88px; height: 88px; filter: drop-shadow(0 2px 2px rgba(0, 0, 0, 0.3)); }
  .app.wide svg { width: 104px; height: 104px; margin: -8px; }
  .app text { fill: #fff; font-family: Roboto, sans-serif; font-weight: 500; text-anchor: middle; }
  .app .day { fill: #222; font-family: Inter, sans-serif; font-weight: 300; }
  .running::after { content: ''; position: absolute; left: 40px; top: 106px; width: 8px; height: 8px; border-radius: 50%; background: #000; }
  .badge { position: absolute; top: -10px; right: -14px; width: 42px; height: 42px; border-radius: 50%; background: #e75244; color: #fff; line-height: 42px; text-align: center; }
  .divider { width: 2px; height: 102px; margin: -2px 10px 0; background: #333; }
</style>
